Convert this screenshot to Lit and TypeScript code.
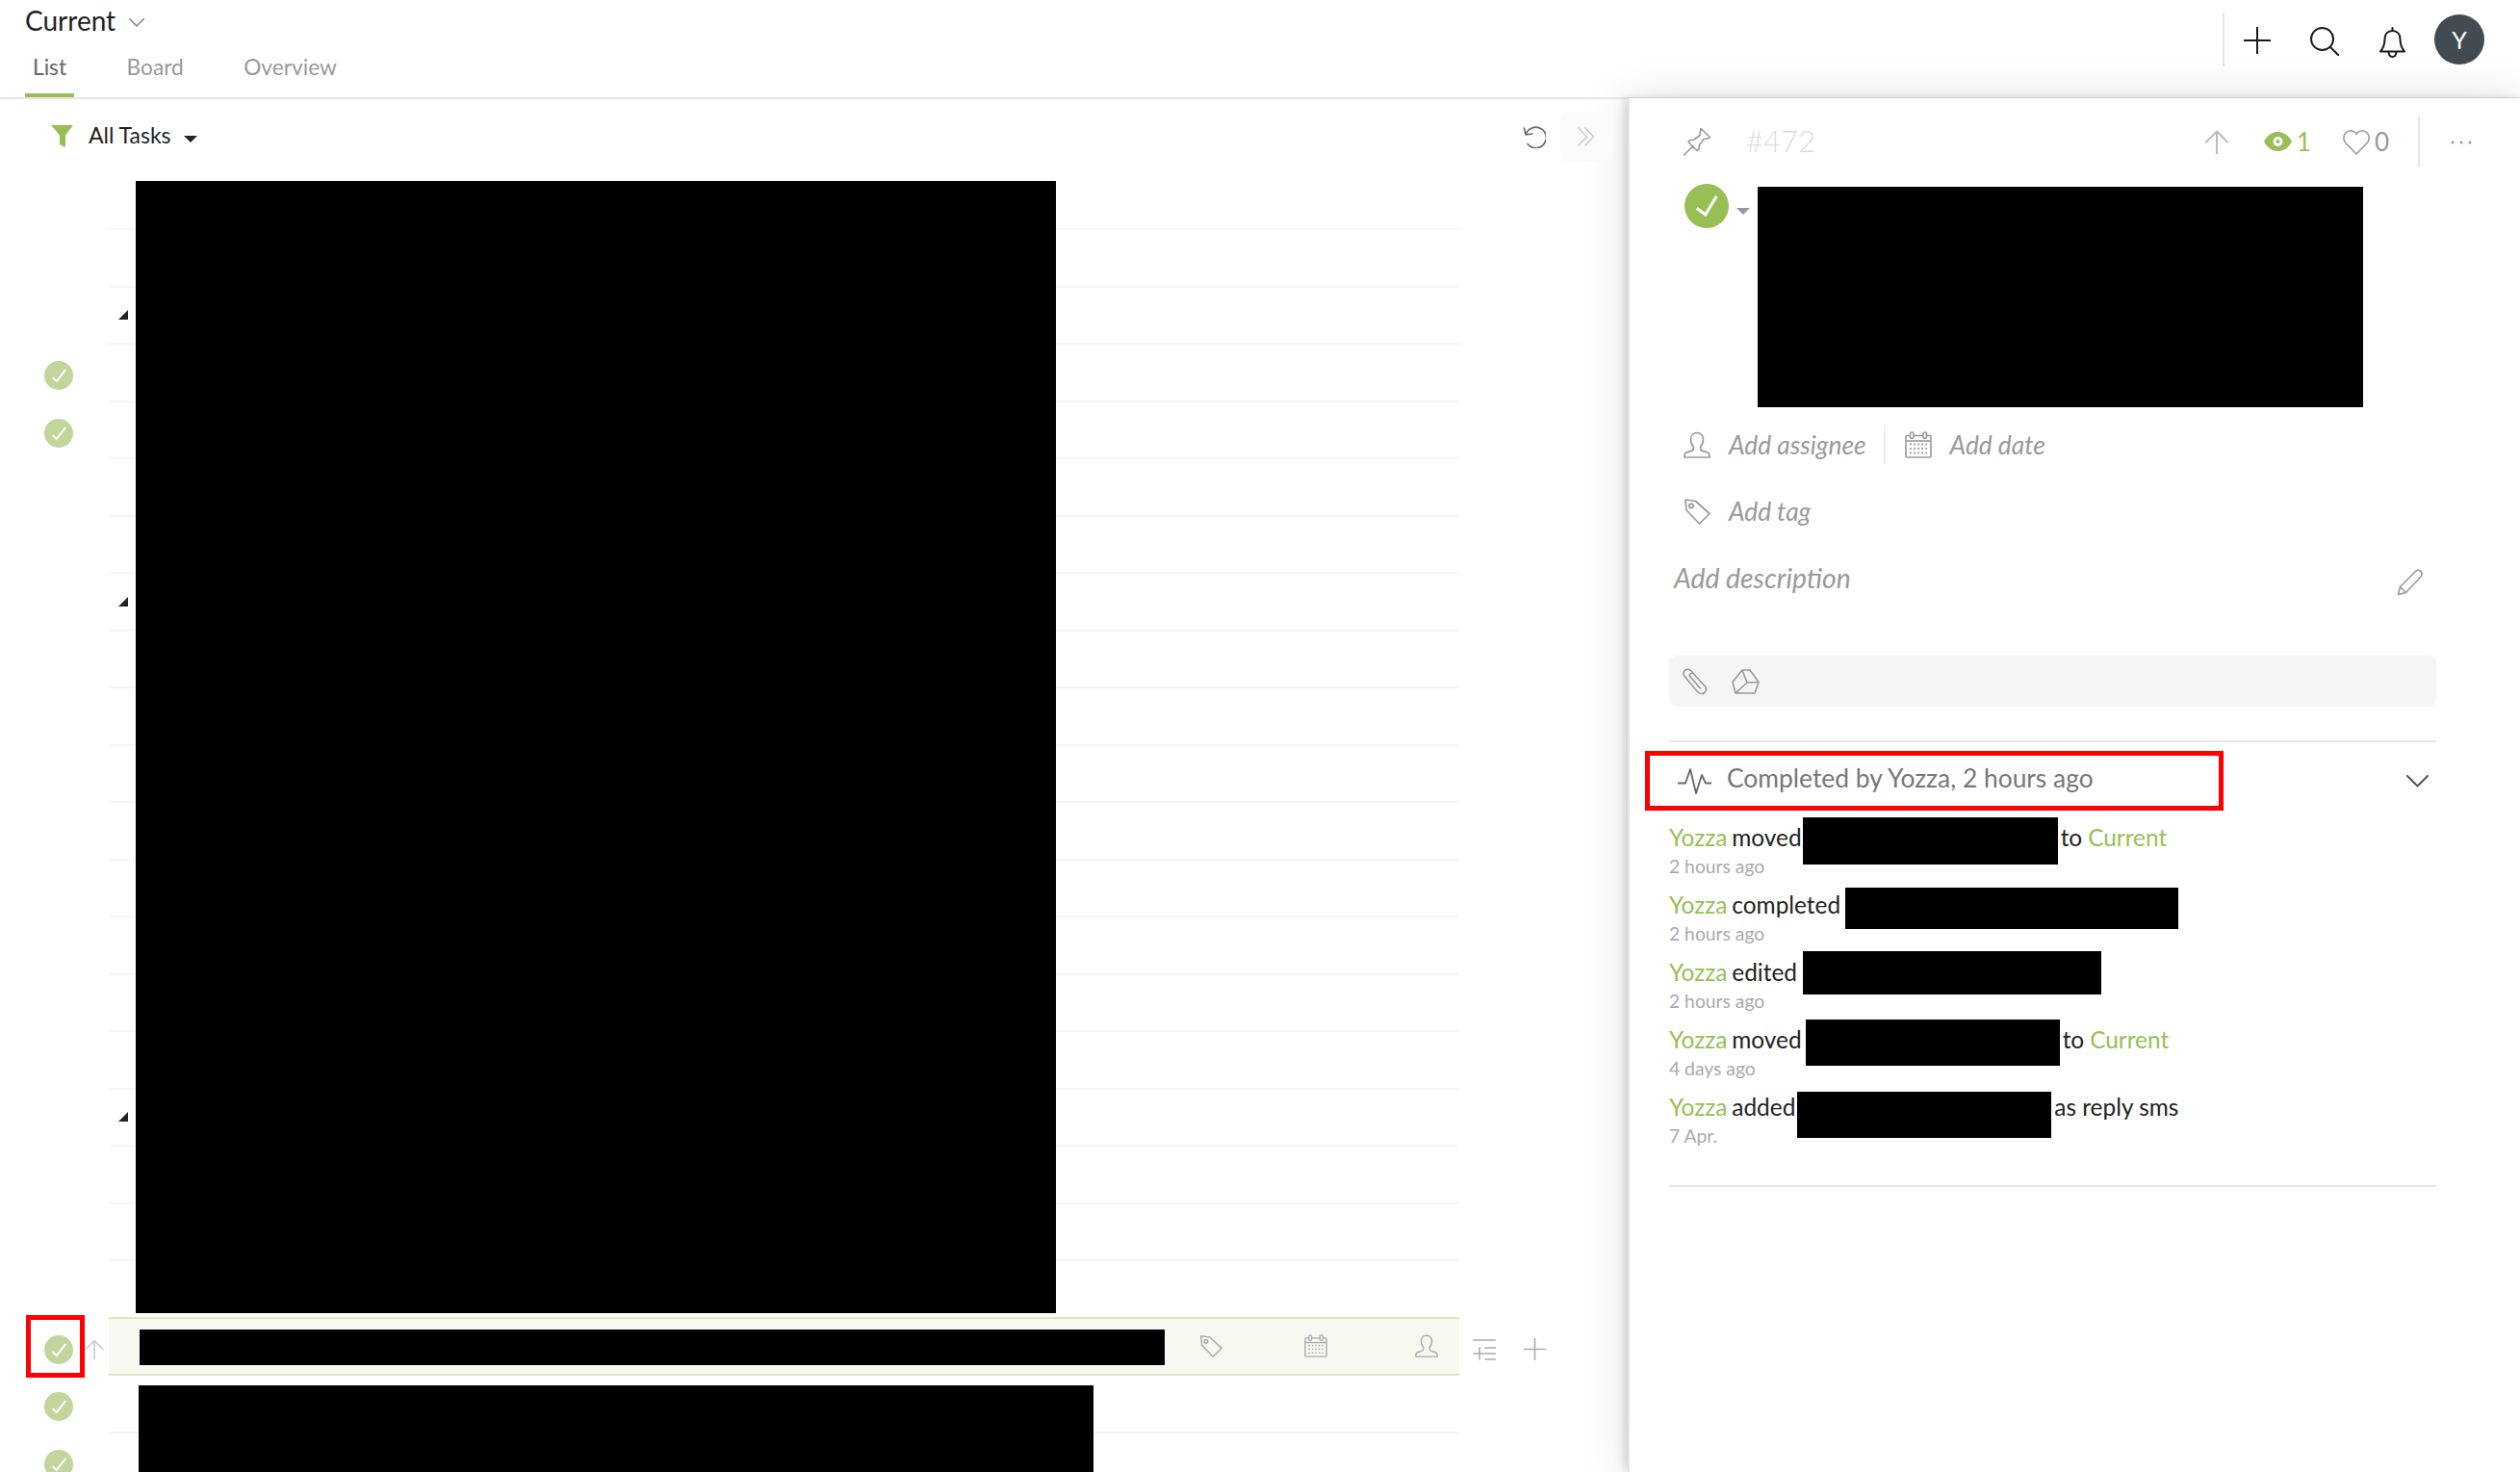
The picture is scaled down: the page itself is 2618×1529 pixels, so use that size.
import { LitElement, html, svg, css } from "lit";
import { customElement } from "lit/decorators.js";

const ic = (w: number, h: number, body: unknown, cls = "") =>
  html`<svg class="ic ${cls}" width=${w} height=${h} viewBox="0 0 ${w} ${h}" fill="none" stroke="currentColor" stroke-width="1.6" stroke-linecap="round" stroke-linejoin="round">${body}</svg>`;

const person = (s: number) => html`<svg class="ic" width=${s} height=${s} viewBox="0 0 28 28" fill="none" stroke="currentColor" stroke-width="1.7" stroke-linejoin="round"><path d="M14 1.500c-4 0-6.500 3-6.500 7 0 3 1.200 5.600 2.800 7.200v2.200c0 1.300-1 2.200-2.800 2.700l-4.600 1.300C1.700 22.500 1 23.800 1 25.200V27h26v-1.800c0-1.400-.7-2.700-1.900-3.300l-4.600-1.300c-1.800-.5-2.800-1.400-2.800-2.700v-2.200c1.600-1.600 2.800-4.200 2.800-7.200 0-4-2.500-7-6.500-7z"/></svg>`;

const calendar = (s: number) => html`<svg class="ic" width=${s} height=${s} viewBox="0 0 28 28" fill="none" stroke="currentColor" stroke-width="1.6"><rect x="1" y="4.500" width="26" height="22.500" rx="1"/><path d="M1 10h26"/><rect x="5.500" y="1" width="3.500" height="6.500" rx="1.700" fill="#fff"/><rect x="19" y="1" width="3.500" height="6.500" rx="1.700" fill="#fff"/><path d="M5 13.500h18M5 18h18M5 22.500h18" stroke-width="1.800" stroke-dasharray="1.800 2.300"/></svg>`;

const tag = (s: number) => html`<svg class="ic" width=${s} height=${s} viewBox="0 0 28 28" fill="none" stroke="currentColor" stroke-width="1.7" stroke-linejoin="round"><path d="M2 2l10.500 1.500L27 16.500 16.500 27 3 13z"/><circle cx="8" cy="8.500" r="2.200"/></svg>`;

const miniCheck = html`<svg class="ic" width="30" height="30" viewBox="0 0 30 30"><circle cx="15" cy="15" r="15" fill="#c1d69a"/><path d="M8.500 17l4.200 4L22.300 8.800" fill="none" stroke="#fff" stroke-width="2"/></svg>`;

interface Act { verb: string; w: number; h: number; dy: number; ml: number; tail?: string; link?: boolean; time: string }
const acts: Act[] = [
  { verb: "moved", w: 265, h: 49, dy: 4, ml: 1, tail: "to", link: true, time: "2 hours ago" },
  { verb: "completed", w: 346, h: 43, dy: 4, ml: 5, time: "2 hours ago" },
  { verb: "edited", w: 310, h: 45, dy: 1, ml: 6, time: "2 hours ago" },
  { verb: "moved", w: 264, h: 48, dy: 4, ml: 4, tail: "to", link: true, time: "4 days ago" },
  { verb: "added", w: 264, h: 48, dy: 9, ml: 2, tail: "as reply sms", time: "7 Apr." },
];

@customElement("app-root")
export class AppRoot extends LitElement {
  static styles = css`
    :host { display: block; width: 100%; height: 100vh; overflow: hidden; background: #fff; font-family: Lato, "Liberation Sans", sans-serif; color: #222; }
    .ic { display: block; flex: none; }
    .top { height: 103px; box-sizing: border-box; border-bottom: 2px solid #e6e6e6; display: flex; justify-content: space-between; }
    .top-left { padding-left: 26px; }
    .title { height: 42px; display: flex; align-items: center; font-size: 28px; color: #1f1f1f; }
    .title .ic { margin-left: 14px; margin-top: 4px; color: #888; }
    .tabs { display: flex; gap: 46.5px; }
    .tab { height: 59px; box-sizing: border-box; padding: 14px 8px 0; font-size: 22.7px; line-height: 28px; color: #999; border-bottom: 4px solid transparent; }
    .tab.on { color: #666; border-bottom-color: #97bf55; }
    .top-right { display: flex; align-items: flex-start; padding: 13px 37px 0 0; color: #1a1a1a; }
    .vsep { width: 2px; height: 56px; background: #e6e6e6; }
    .t-plus { margin: 15px 0 0 20px; }
    .t-search { margin: 15px 0 0 41px; }
    .t-bell { margin: 15px 0 0 42px; }
    .avatar { margin: 2px 0 0 30px; width: 52px; height: 52px; border-radius: 50%; background: #434b52; color: #fff; display: flex; align-items: center; justify-content: center; font-size: 25px; }

    .main { display: flex; height: calc(100vh - 103px); }
    .list { width: 1691px; flex: none; position: relative; overflow: hidden; }
    .panel { position: relative; z-index: 2; margin-top: -1px; flex: 1; background: #fff; border-left: 2px solid #e6e6e6; padding: 1px 0 0 41px; box-shadow: -4px 0 10px rgba(0,0,0,.14), 0 0 50px rgba(0,0,0,.1); }

    .list-bar { height: 76.5px; box-sizing: border-box; display: flex; align-items: center; padding: 1px 16px 0 53px; }
    .funnel { color: #97bf55; }
    .all { margin: 0 0 3px 16px; font-size: 23px; color: #1f1f1f; }
    .caret { margin-left: 13px; margin-top: 6px; width: 0; height: 0; border: 7px solid transparent; border-top: 7px solid #222; border-bottom: 0; }
    .undo { margin-left: auto; color: #666; }
    .chev { position: relative; z-index: 3; margin-left: 15px; width: 54px; height: 52px; border-radius: 7px; background: #fbfbfb; display: flex; align-items: center; justify-content: center; color: #ccc; }

    .row { height: 59.5px; display: flex; align-items: stretch; }
    .gutter { width: 113px; flex: none; box-sizing: border-box; padding: 5px 0 0 46px; display: flex; align-items: center; }
    .gutter .up { margin-left: 12px; color: #ccc; }
    .body { width: 1403px; flex: none; box-sizing: border-box; border-bottom: 2px solid #f5f5f5; display: flex; align-items: center; }
    .row.pre .body { border-bottom-color: #dbe7c6; }
    .row.hl .body { background: #f6f9f0; border-bottom-color: #dbe7c6; color: #aaa; }
    .tri { margin-left: 10px; width: 0; height: 0; border-style: solid; border-width: 0 0 10px 10px; border-color: transparent transparent #222 transparent; }
    .hl-block { margin: 3px 0 0 32px; width: 1065px; height: 37px; background: #000; flex: none; }
    .hl .i-tag { margin-left: 36px; }
    .hl .i-cal { margin-left: 85px; }
    .hl .i-per { margin-left: 91px; }
    .after { display: flex; align-items: center; color: #aaa; padding: 5px 0 0 14px; }
    .after .p { margin-left: 29px; }
    .mask { position: absolute; background: #000; }
    .mask.a { left: 141px; top: 85px; width: 956px; height: 1176px; }
    .mask.b { left: 144px; top: 1336px; width: 992px; height: 120px; }
    .redbox { position: absolute; left: 27px; top: 1263px; width: 61px; height: 65px; box-sizing: border-box; border: 5px solid #f00; }

    .p-bar { height: 88px; display: flex; align-items: center; color: #999; }
    .p-bar .pin { margin-left: 14px; }
    .num { margin: 0 0 3px 36px; font-size: 31px; font-weight: 300; color: #ddd; }
    .p-bar .arrow { margin-left: auto; color: #bbb; }
    .p-bar .eye { margin-left: 37px; color: #97bf55; }
    .count { font-size: 26px; line-height: 30px; margin-left: 5px; }
    .count.g { color: #97bf55; }
    .p-bar .heart { margin-left: 33px; }
    .p-bar .vs { width: 2px; height: 52px; background: #e6e6e6; margin-left: 30px; }
    .p-bar .dots { margin: 2px 50px 0 32px; }
    .head { display: flex; align-items: flex-start; height: 233px; margin-left: 16px; }
    .head .car { margin: 25px 0 0 8px; width: 0; height: 0; border: 7px solid transparent; border-top: 7px solid #999; border-bottom: 0; }
    .head .blk { margin: 3px 0 0 8px; width: 629px; height: 229px; background: #000; }
    .line { display: flex; align-items: center; height: 41px; margin-left: 15px; color: #999; font-size: 26.3px; font-style: italic; }
    .line .lbl { margin-left: 19px; color: #999; }
    .as { margin-top: 17px; }
    .divv { width: 1px; height: 41px; background: #e6e6e6; margin: 0 21px 0 18px; }
    .tg { margin-top: 28px; }
    .desc { margin-top: 29px; width: 797px; height: 40px; display: flex; align-items: center; justify-content: space-between; padding-left: 5px; box-sizing: border-box; color: #999; font-size: 28.3px; font-style: italic; }
    .desc .ic { margin: 10px 13px 0 0; }
    .attach { margin-top: 61px; width: 797px; height: 53px; box-sizing: border-box; background: #f5f5f5; border-radius: 8px; padding-left: 14px; display: flex; align-items: center; color: #999; }
    .attach .dr { margin-left: 25px; }
    .rule { width: 797px; height: 2px; background: #e6e6e6; }
    .r1 { margin-top: 35px; }
    .done-row { display: flex; align-items: center; margin: 9px 0 0 -25px; width: 822px; justify-content: space-between; }
    .done { width: 601px; height: 62px; box-sizing: border-box; border: 5px solid #f00; display: flex; align-items: center; padding: 0 0 6px 29px; font-size: 26.4px; color: #777; }
    .done .ic { color: #666; margin: 6px 16px 0 0; }
    .done-row > .ic { color: #555; margin-right: 8px; }
    .acts { margin-top: 7px; }
    .act { height: 70px; }
    .act-l { height: 40px; display: flex; align-items: center; font-size: 24.4px; color: #222; white-space: nowrap; }
    .g { color: #97bf55; }
    .act-l .g { margin-right: 5px; }
    .rd { background: #000; margin-right: 3px; flex: none; }
    .act-l .g.end { margin: 0 0 0 6px; }
    .time { height: 20px; line-height: 20px; padding-top: 1px; font-size: 19.3px; color: #aaa; }
    .r2 { margin-top: 32px; }
  `;

  private renderRow(i: number) {
    const done = i === 4 || i === 5;
    const tri = i === 3 || i === 8 || i === 17;
    if (i === 21) {
      return html`<div class="row hl">
        <div class="gutter">${miniCheck}${ic(20, 22, svg`<path d="M10 21V1.500M1 10.500L10 1.500l9 9"/>`, "up")}</div>
        <div class="body"><div class="hl-block"></div><span class="i-tag">${tag(24)}</span><span class="i-cal">${calendar(24)}</span><span class="i-per">${person(24)}</span></div>
        <div class="after">
          ${ic(24, 22, svg`<path d="M1 1h23M13 9h11M13 15h11M13 21h11M1 15h12M7 9v12"/>`)}
          ${ic(23, 23, svg`<path d="M11.500 0v23M0 11.500h23"/>`, "p")}
        </div>
      </div>`;
    }
    return html`<div class="row ${i === 20 ? "pre" : ""}">
      <div class="gutter">${done || i >= 22 ? miniCheck : ""}</div>
      <div class="body">${tri ? html`<div class="tri"></div>` : ""}</div>
    </div>`;
  }

  render() {
    const rows = Array.from({ length: 24 }, (_, k) => k + 1);
    return html`
      <div class="top">
        <div class="top-left">
          <div class="title">Current${ic(16, 9, svg`<path d="M.8.800L8 8l7.200-7.200"/>`)}</div>
          <div class="tabs"><div class="tab on">List</div><div class="tab">Board</div><div class="tab">Overview</div></div>
        </div>
        <div class="top-right">
          <div class="vsep"></div>
          ${ic(28, 28, svg`<path d="M14 0v28M0 14h28" stroke-width="2"/>`, "t-plus")}
          ${ic(30, 30, svg`<circle cx="12.500" cy="12.500" r="11.500" stroke-width="2"/><path d="M21 21l8.500 8.500" stroke-width="2"/>`, "t-search")}
          ${ic(27, 32, svg`<path d="M13.500 4c-5 0-8 3.500-8 8.500 0 6-1.500 9.500-4.500 13h25c-3-3.500-4.500-7-4.500-13 0-5-3-8.500-8-8.500zM13.500 1v3M9.500 25.500c0 3.500 1.800 5.500 4 5.500s4-2 4-5.500" stroke-width="2"/>`, "t-bell")}
          <div class="avatar">Y</div>
        </div>
      </div>
      <div class="main">
        <div class="list">
          <div class="list-bar">
            <svg class="ic funnel" width="23" height="23" viewBox="0 0 23 23"><path d="M0 0h23l-8 10.500V23l-6-3V10.500z" fill="currentColor"/></svg>
            <span class="all">All Tasks</span><span class="caret"></span>
            ${ic(24, 24, svg`<path d="M3.500 9A10.800 10.800 0 1 1 5 19.500M1.500 3l1.500 7 7-1"/>`, "undo")}
            <div class="chev">${ic(18, 20, svg`<path d="M1 1l8.500 9L1 19M8 1l8.500 9L8 19"/>`)}</div>
          </div>
          ${rows.map((i) => this.renderRow(i))}
          <div class="mask a"></div>
          <div class="mask b"></div>
          <div class="redbox"></div>
        </div>
        <div class="panel">
          <div class="p-bar">
            ${ic(30, 30, svg`<path d="M19 1.500l9.500 9-2.500 1.500-4 .5-4.500 6-.5 4.500-2 1.500-9-9 1.500-2 4.500-.5 6-4.500.5-4zM11 19.500L1.500 29"/>`, "pin")}
            <span class="num">#472</span>
            ${ic(24, 25, svg`<path d="M12 24.500V1.500M1 12.500L12 1.500l11 11" stroke-width="2"/>`, "arrow")}
            <svg class="ic eye" width="29" height="20" viewBox="0 0 29 20"><path fill-rule="evenodd" fill="currentColor" d="M14.500 0C22 0 27 6 29 10c-2 4-7 10-14.500 10S2 14 0 10C2 6 7 0 14.500 0zm0 5a5 5 0 1 0 0 10 5 5 0 0 0 0-10zm0 3a2 2 0 1 1 0 4 2 2 0 0 1 0-4z"/></svg>
            <span class="count g">1</span>
            ${ic(28, 27, svg`<path d="M14 26L2.800 14.500C.2 11.700.3 6.800 2.800 4c2.800-3 7.800-3 10.300 0l.9 1.200L14.900 4c2.500-3 7.500-3 10.300 0 2.500 2.800 2.600 7.700 0 10.500z"/>`, "heart")}
            <span class="count">0</span>
            <div class="vs"></div>
            ${ic(22, 4, svg`<circle cx="2" cy="2" r="1.500" fill="currentColor" stroke="none"/><circle cx="11" cy="2" r="1.500" fill="currentColor" stroke="none"/><circle cx="20" cy="2" r="1.500" fill="currentColor" stroke="none"/>`, "dots")}
          </div>
          <div class="head">
            <svg class="ic" width="46" height="46" viewBox="0 0 46 46"><circle cx="23" cy="23" r="23" fill="#97bf55"/><path d="M12.700 25.300l9 6.700L33.300 12.700" fill="none" stroke="#fff" stroke-width="3"/></svg>
            <span class="car"></span>
            <div class="blk"></div>
          </div>
          <div class="line as">${person(28)}<span class="lbl">Add assignee</span><span class="divv"></span>${calendar(28)}<span class="lbl">Add date</span></div>
          <div class="line tg">${tag(28)}<span class="lbl">Add tag</span></div>
          <div class="desc"><span>Add description</span>
            ${ic(28, 28, svg`<path d="M1.500 26.500l2-8L19.500 2.500c1.500-1.500 4-1.500 5.500 0s1.500 4 0 5.500L9.500 24.500zM3.500 18.500l6 6"/>`)}
          </div>
          <div class="attach">
            ${ic(26, 28, svg`<path d="M18.500 21L8.200 9.300C7.300 8.300 7.200 7 8 6c1-1 2.500-1 3.500 0l12 13c1.500 2 1.500 4.500-.7 6.500-2.300 1.800-5.300 1.300-7.300-1L2.500 9C.8 7 .6 4.300 2.300 2.500 4 .8 7 .8 9 3l3 3.500"/>`)}
            ${ic(29, 26, svg`<path d="M11 1h8l9 12.500-4 11.500H4L1 13.500zM11 1l5 13M28 13.500L16 14M4 25l12-11M1 13.500L11 1"/>`, "dr")}
          </div>
          <div class="rule r1"></div>
          <div class="done-row">
            <div class="done">
              ${ic(35, 28, svg`<path d="M0 16.500h8L13 2l6 25 6-19 4 8.500h6" stroke-width="1.800"/>`)}
              Completed by Yozza, 2 hours ago
            </div>
            ${ic(23, 13, svg`<path d="M1 1l10.500 10.500L22 1" stroke-width="2"/>`)}
          </div>
          <div class="acts">
            ${acts.map((a) => html`<div class="act">
              <div class="act-l">
                <span class="g">Yozza</span><span>${a.verb}</span>
                <span class="rd" style="width:${a.w}px;height:${a.h}px;margin-top:${a.dy * 2}px;margin-left:${a.ml}px"></span>
                ${a.tail ? html`<span>${a.tail}</span>` : ""}
                ${a.link ? html`<span class="g end">Current</span>` : ""}
              </div>
              <div class="time">${a.time}</div>
            </div>`)}
          </div>
          <div class="rule r2"></div>
        </div>
      </div>
    `;
  }
}
